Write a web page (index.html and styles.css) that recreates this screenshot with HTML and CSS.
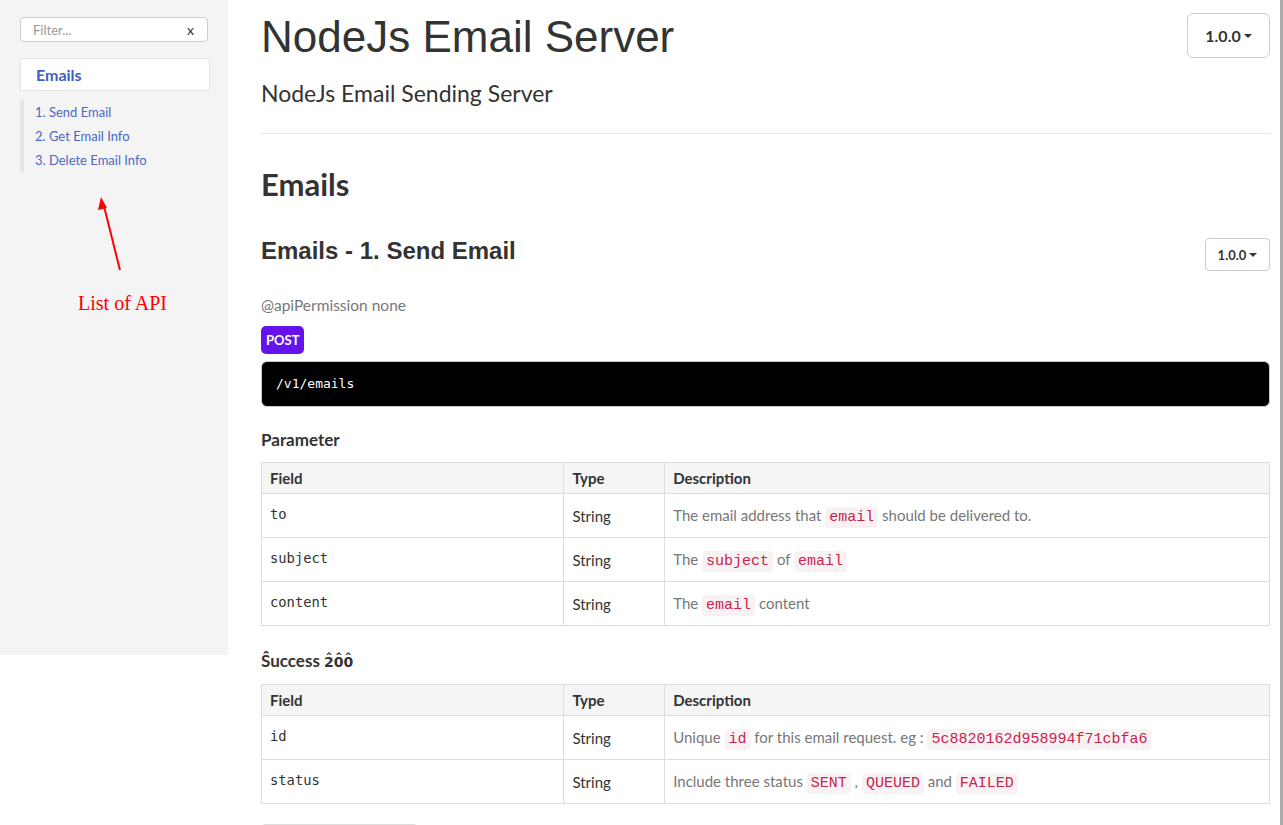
FILE: index.html
```html
<!DOCTYPE html>
<html lang="en">
<head>
<meta charset="utf-8">
<title>NodeJs Email Server</title>
<link rel="stylesheet" href="styles.css">
</head>
<body>
<div class="page">
  <aside class="sidebar">
    <div class="filter">
      <span class="filter-ph">Filter...</span>
      <span class="filter-x">x</span>
    </div>
    <div class="group">Emails</div>
    <ul class="nav">
      <li>1. Send Email</li>
      <li>2. Get Email Info</li>
      <li>3. Delete Email Info</li>
    </ul>
    <svg class="annot-arrow" width="40" height="80" viewBox="0 0 40 80">
      <line x1="30" y1="74" x2="14" y2="10" stroke="#ff0000" stroke-width="2"/>
      <polygon points="11,1 8,14 17,12" fill="#ff0000"/>
    </svg>
    <div class="annot-text">List of API</div>
  </aside>
  <main class="main">
    <div class="head-row">
      <h1 class="title">NodeJs Email Server</h1>
      <button class="ver ver-lg">1.0.0<span class="caret"></span></button>
    </div>
    <p class="subtitle">NodeJs Email Sending Server</p>
    <hr class="rule">
    <h2 class="section">Emails</h2>
    <div class="api-row">
      <h3 class="api-title">Emails - 1. Send Email</h3>
      <button class="ver ver-sm">1.0.0<span class="caret"></span></button>
    </div>
    <p class="perm">@apiPermission none</p>
    <span class="badge">POST</span>
    <pre class="endpoint">/v1/emails</pre>
    <h4 class="sub">Parameter</h4>
    <table class="tbl">
      <colgroup><col class="c1"><col class="c2"><col class="c3"></colgroup>
      <thead><tr><th>Field</th><th>Type</th><th>Description</th></tr></thead>
      <tbody>
        <tr><td class="field">to</td><td>String</td><td class="desc">The email address that <code>email</code> should be delivered to.</td></tr>
        <tr><td class="field">subject</td><td>String</td><td class="desc">The <code>subject</code> of <code>email</code></td></tr>
        <tr><td class="field">content</td><td>String</td><td class="desc">The <code>email</code> content</td></tr>
      </tbody>
    </table>
    <h4 class="sub sub2">Ŝuccess <span class="hat">2̂0̂0̂</span></h4>
    <table class="tbl">
      <colgroup><col class="c1"><col class="c2"><col class="c3"></colgroup>
      <thead><tr><th>Field</th><th>Type</th><th>Description</th></tr></thead>
      <tbody>
        <tr><td class="field">id</td><td>String</td><td class="desc">Unique <code>id</code> for this email request. eg : <code>5c8820162d958994f71cbfa6</code></td></tr>
        <tr><td class="field">status</td><td>String</td><td class="desc">Include three status <code>SENT</code> , <code>QUEUED</code> and <code>FAILED</code></td></tr>
      </tbody>
    </table>
    <div class="tabs"></div>
  </main>
</div>
</body>
</html>
```
FILE: styles.css
```css
* { box-sizing: border-box; }
html, body { margin: 0; padding: 0; }
body {
  font-family: "Lato", "Noto Sans", sans-serif;
  color: #333;
  background: #fff;
  overflow: hidden;
}
.page {
  display: flex;
  align-items: flex-start;
  width: 1283px;
  height: 825px;
  border-right: 3px solid #ababab;
}
.sidebar {
  position: relative;
  width: 228px;
  flex: none;
  height: 655px;
  background: #f4f4f4;
  padding: 17px 18px 0 20px;
}
.filter {
  width: 188px;
  height: 25px;
  border: 1px solid #cccccc;
  border-radius: 4px;
  background: #fff;
  display: flex;
  align-items: center;
  justify-content: space-between;
  padding: 0 13px 0 12px;
  font-size: 13px;
}
.filter-ph { color: #999; }
.filter-x { color: #333; font-size: 14px; }
.group {
  margin-top: 16px;
  width: 190px;
  height: 33px;
  background: #fff;
  border: 1px solid #e3e3e3;
  color: #4060c0;
  font-weight: 700;
  font-size: 16px;
  line-height: 32px;
  padding-left: 15px;
}
.nav {
  list-style: none;
  margin: 9px 0 0 0;
  padding: 0 0 0 11px;
  border-left: 4px solid #e4e4e4;
}
.nav li {
  font-size: 13px;
  line-height: 24px;
  color: #4a68c4;
}
.annot-arrow {
  position: absolute;
  left: 90px;
  top: 196px;
}
.annot-text {
  position: absolute;
  left: 0;
  width: 245px;
  top: 292px;
  text-align: center;
  font-family: "Liberation Serif", serif;
  font-size: 20px;
  color: #ff0000;
}
.main {
  flex: 1;
  padding: 0 10px 0 33px;
}
.head-row {
  display: flex;
  justify-content: space-between;
  align-items: flex-start;
}
.title {
  margin: 11px 0 0 0;
  font-family: "Liberation Sans", Arial, sans-serif;
  font-weight: 400;
  font-size: 44px;
  line-height: 52px;
  color: #333;
}
.ver {
  font-family: "Lato", sans-serif;
  font-weight: 700;
  color: #333;
  background: #fff;
  border: 1px solid #cccccc;
  display: flex;
  align-items: center;
  justify-content: center;
}
.ver-lg {
  margin-top: 13px;
  width: 83px;
  height: 45px;
  border-radius: 6px;
  font-size: 16px;
}
.ver-sm {
  margin-top: 4px;
  width: 65px;
  height: 33px;
  border-radius: 4px;
  font-size: 13px;
}
.caret {
  display: inline-block;
  width: 0;
  height: 0;
  margin-left: 3px;
  border-top: 4px solid #333;
  border-left: 4px solid transparent;
  border-right: 4px solid transparent;
}
.subtitle {
  margin: 15px 0 0 0;
  font-size: 23px;
  line-height: 30px;
  color: #333;
}
.rule {
  margin: 25px 0 0 0;
  border: 0;
  border-top: 1px solid #e8e8e8;
}
.section {
  margin: 32px 0 0 0;
  font-size: 31px;
  line-height: 36px;
  font-weight: 700;
}
.api-row {
  margin-top: 32px;
  display: flex;
  justify-content: space-between;
  align-items: flex-start;
}
.api-title {
  margin: 0;
  font-family: "Liberation Sans", Arial, sans-serif;
  font-size: 24px;
  line-height: 34px;
  font-weight: 700;
}
.perm {
  margin: 23px 0 0 0;
  font-size: 15.5px;
  line-height: 22px;
  color: #777;
}
.badge {
  display: inline-block;
  margin-top: 10px;
  height: 28px;
  padding: 0 5px;
  line-height: 28px;
  background: #6513ec;
  color: #fff;
  font-weight: 700;
  font-size: 13px;
  border-radius: 5px;
  vertical-align: top;
}
.endpoint {
  margin: 7px 0 0 0;
  height: 46px;
  background: #000;
  color: #fff;
  border: 1px solid #ccc;
  border-radius: 6px;
  font-family: "DejaVu Sans Mono", monospace;
  font-size: 13px;
  line-height: 44px;
  padding: 0 14px;
}
.sub {
  margin: 21px 0 0 0;
  font-size: 17px;
  line-height: 24px;
  font-weight: 700;
}
.sub2 { margin-top: 23px; height: 24px; }
.hat { font-family: "DejaVu Sans", sans-serif; font-size: 14px; line-height: 14px; }
.tbl {
  margin-top: 10px;
  width: 100%;
  border-collapse: collapse;
  table-layout: fixed;
  font-size: 15px;
}
.sub2 + .tbl { margin-top: 11px; }
.c1 { width: 30%; }
.c2 { width: 10%; }
.tbl th, .tbl td {
  border: 1px solid #ddd;
  text-align: left;
  padding: 0 8px;
}
.tbl th {
  background: #f5f5f5;
  height: 31px;
  font-weight: 700;
  font-size: 15px;
}
.tbl td {
  height: 44px;
  color: #333;
  padding-top: 1px;
}
.tbl td.field {
  font-family: "DejaVu Sans Mono", monospace;
  font-size: 13.8px;
  vertical-align: top;
  padding-top: 12px;
}
.tbl td.desc { color: #777; }
code {
  font-family: "Liberation Mono", monospace;
  font-size: 15px;
  color: #c7254e;
  background: #f9f2f4;
  border-radius: 4px;
  padding: 2px 4px;
}
.tabs {
  margin-top: 20px;
  width: 157px;
  height: 34px;
  border: 1px solid #ddd;
  border-radius: 4px 4px 0 0;
}
```
